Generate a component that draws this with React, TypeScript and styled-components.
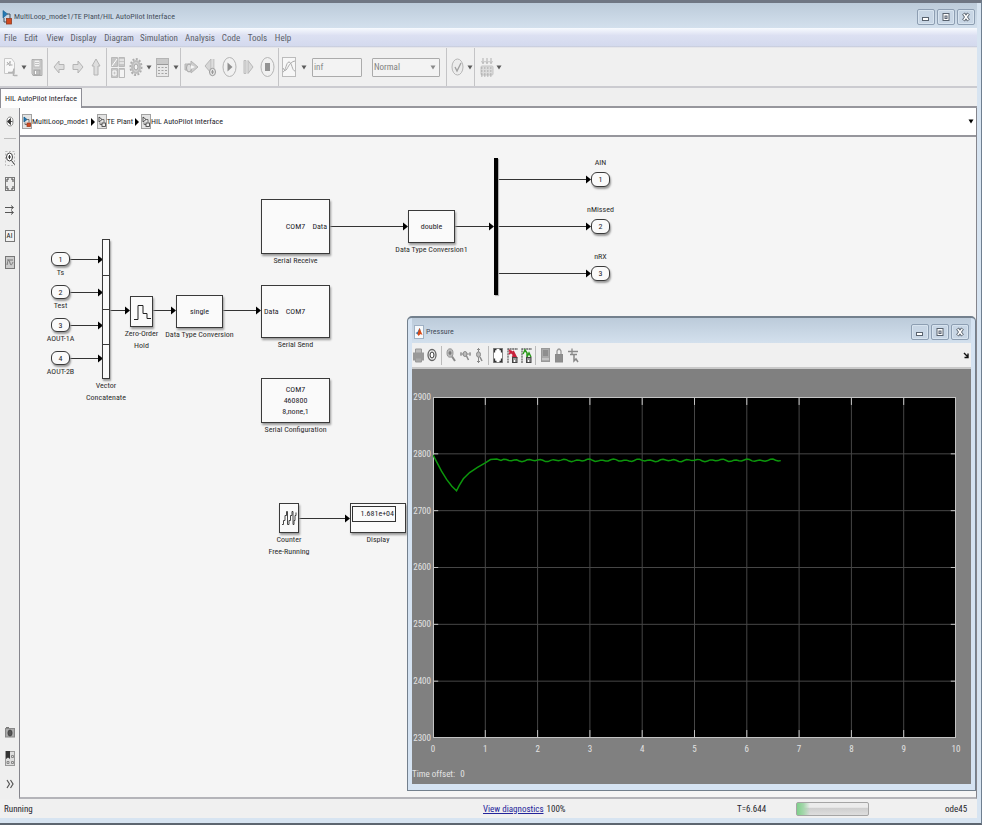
import React from "react";
import styled, { createGlobalStyle } from "styled-components";

const UI = `"Roboto Condensed", Roboto, "Liberation Sans", sans-serif`;

const GlobalStyle = createGlobalStyle`
  *, *::before, *::after { box-sizing: border-box; }
  body { margin: 0; font: 9px/12px ${UI}; color: #26262c; background: #d6e3f1; }
  button, input, select { font: inherit; color: inherit; margin: 0; }
  svg { display: block; flex: none; }
`;

/* ---------- window frame ---------- */

const AppWindow = styled.div`
  min-height: 100vh;
  display: flex;
  flex-direction: column;
  padding: 0 4px 5px 0;
  background: #d7e4f1;
  border-top: 3px solid #6f7683;
  border-right: 1px solid #6f7f90;
  border-bottom: 2px solid #5d6670;
`;

const TitleBar = styled.header<{ $height: number; $inset: number }>`
  display: flex;
  align-items: center;
  gap: 2px;
  flex: none;
  height: ${(p) => p.$height}px;
  padding: 3px ${(p) => p.$inset}px 0 2px;
  background: linear-gradient(#bccbda, #d3e0ed);
`;

const WindowTitle = styled.h1`
  flex: 1;
  margin: 0;
  font-weight: 400;
  font-size: 8px;
  line-height: 14px;
  color: #454f5c;
`;

const Caption = styled.div`
  display: flex;
  gap: 2px;
`;

const CaptionButton = styled.button`
  width: 18px;
  height: 16px;
  padding: 0;
  display: grid;
  place-items: center;
  border: 1px solid #8d9eb2;
  border-radius: 2px;
  background: #c8d6e5;
  box-shadow: inset 0 0 0 1px #d8e4ef;
`;

const MenuBar = styled.nav`
  display: flex;
  align-items: flex-start;
  flex: none;
  height: 19px;
  padding: 4px 4px 0;
  background: linear-gradient(#f7fafe, #dce0f2 40%, #d4daee 92%, #c6cad8);
`;

const MenuItem = styled.button<{ $width: number }>`
  width: ${(p) => p.$width}px;
  padding: 0;
  border: 0;
  background: none;
  font-size: 9px;
  line-height: 12px;
  color: #5c5f69;
`;

/* ---------- toolbars ---------- */

const ToolBar = styled.div`
  display: flex;
  flex: none;
  height: 41px;
  background: #f0f0f0;
  border-top: 1px solid #e6e6ea;
  border-bottom: 2px solid #cbcbd0;
  color: #b0b0b0;
`;

const ToolGroup = styled.div<{ $start?: number; $end?: number; $last?: boolean }>`
  display: flex;
  align-items: center;
  padding: 0 ${(p) => p.$end ?? 1}px 0 ${(p) => p.$start ?? 1}px;
  border-right: ${(p) => (p.$last ? 0 : 1)}px solid #c4c4c6;
`;

const ToolButton = styled.button<{ $width: number }>`
  width: ${(p) => p.$width}px;
  height: 24px;
  padding: 0;
  border: 0;
  background: none;
  display: grid;
  place-items: center;
`;

const StopTime = styled.input`
  width: 50px;
  height: 19px;
  margin-left: 4px;
  padding: 0 1px;
  border: 1px solid #ababab;
  border-radius: 1px;
  background: #f3f3f3;
  color: #8b8b8b;
`;

const SelectBox = styled.label`
  display: flex;
  align-items: center;
  width: 68px;
  height: 19px;
  margin: 0 5px 0 10px;
  padding-right: 3px;
  border: 1px solid #ababab;
  border-radius: 1px;
  background: #f3f3f3;
`;

const ModeSelect = styled.select`
  flex: 1;
  appearance: none;
  border: 0;
  padding: 0 1px;
  background: none;
  color: #808080;
`;

const TabStrip = styled.div`
  display: flex;
  flex: none;
  height: 20px;
  background: #efefef;
`;

const Tab = styled.button`
  padding: 0 4px;
  border: 1px solid #8e8e96;
  border-width: 1px 1px 0;
  background: #fdfdfd;
  font-size: 8px;
`;

const TabRest = styled.div`
  flex: 1;
  border-bottom: 2px solid #96969c;
`;

const Body = styled.div`
  flex: 1;
  display: flex;
  background: #efefef;
`;

const SideBar = styled.aside`
  width: 19px;
  flex: none;
  display: flex;
  flex-direction: column;
  align-items: center;
  padding-bottom: 2px;
`;

const SideButton = styled.button`
  width: 19px;
  height: 26px;
  padding: 0;
  border: 0;
  background: none;
  display: grid;
  place-items: center;
`;

const SideRule = styled.hr`
  width: 12px;
  margin: 4px 0 6px;
  border: 0;
  border-top: 1px solid #bdbdbd;
`;

const Spacer = styled.div`
  flex: 1;
`;

const Editor = styled.main`
  flex: 1;
  min-width: 0;
  display: flex;
  flex-direction: column;
  border-left: 1px solid #85858c;
  border-right: 1px solid #85858c;
  border-bottom: 2px solid #b4b4b9;
`;

const Crumbs = styled.nav`
  display: flex;
  align-items: center;
  flex: none;
  height: 29px;
  padding: 0 2px;
  background: #fff;
  border-bottom: 2px solid #96969c;
`;

const Crumb = styled.button`
  display: flex;
  align-items: center;
  gap: 0;
  padding: 0;
  border: 0;
  background: none;
  font-size: 8px;
`;

const CrumbArrow = styled.span`
  margin: 0 2px;
  border: 4px solid transparent;
  border-left: 4px solid #000;
  border-right: 0;
`;

const PathMenu = styled.button`
  margin-left: auto;
  padding: 0;
  border: 0;
  background: none;
`;

/* ---------- block diagram ---------- */

const Canvas = styled.section`
  position: relative;
  flex: 1;
  min-height: 600px;
  background: #f5f5f5;
  overflow: hidden;
`;

const Wires = styled.svg`
  position: absolute;
  inset: 0;
  width: 100%;
  height: 100%;
`;

const Block = styled.div<{ $x: number; $y: number; $w: number; $h: number; $round?: boolean }>`
  position: absolute;
  left: ${(p) => p.$x}px;
  top: ${(p) => p.$y}px;
  width: ${(p) => p.$w}px;
  height: ${(p) => p.$h}px;
  display: grid;
  place-items: center;
  text-align: center;
  font-size: 8px;
  line-height: 11px;
  background: #fafafa;
  border: 1px solid #3a3a3a;
  border-radius: ${(p) => (p.$round ? 6 : 0)}px;
  box-shadow: 1px 2px 2px #9a9a9a;
`;

const BlockName = styled.span<{ $above?: boolean }>`
  position: absolute;
  left: 50%;
  ${(p) => (p.$above ? "bottom: 100%; padding-bottom: 4px;" : "top: 100%; padding-top: 2px;")}
  transform: translateX(-50%);
  white-space: pre;
  font-size: 8px;
  line-height: 12px;
  color: #2e2e2e;
`;

const PortName = styled.span<{ $side: "left" | "right" }>`
  position: absolute;
  ${(p) => p.$side}: 2px;
  top: 50%;
  margin-top: -6px;
`;

const Bar = styled.div<{ $x: number; $y: number }>`
  position: absolute;
  left: ${(p) => p.$x}px;
  top: ${(p) => p.$y}px;
  width: 4px;
  height: 137px;
  background: #000;
  box-shadow: 1px 1px 1px #aaa;
`;

const ConcatCells = styled.div`
  width: 100%;
  height: 100%;
  display: grid;
  grid-template-rows: repeat(4, 1fr);
  > span + span { border-top: 1px solid #3a3a3a; }
`;

const Readout = styled.output`
  justify-self: start;
  align-self: start;
  width: 44px;
  height: 16px;
  margin: 2px 1px;
  padding: 1px 1px 0 0;
  border: 1px solid #333;
  text-align: right;
`;

/* ---------- scope window ---------- */

const ScopeWindow = styled.section`
  position: absolute;
  left: 387px;
  top: 179px;
  right: 0;
  bottom: 6px;
  display: flex;
  flex-direction: column;
  padding: 0 4px 6px;
  background: #d5e3f2;
  border: 2px solid #73808d;
  border-width: 2px 1px 1px;
  border-radius: 5px 5px 0 0;
`;

const ScopeTools = styled.div`
  display: flex;
  align-items: center;
  flex: none;
  height: 26px;
  padding-right: 1px;
  background: #f0f0f0;
  border-bottom: 2px solid #c9c9c9;
  color: #8a8a8a;
`;

const ScopeRule = styled.span`
  width: 1px;
  height: 19px;
  margin: 0 2px;
  background: #bbb;
`;

const DockButton = styled(ToolButton)`
  margin-left: auto;
`;

const ScopeBody = styled.div`
  flex: 1;
  display: grid;
  grid-template-columns: 21px 1fr;
  grid-template-rows: 1fr 16px;
  padding: 28px 15px 4px 0;
  background: #808080;
  color: #e2e2e2;
  font-size: 9px;
`;

const YAxis = styled.div`
  display: flex;
  flex-direction: column;
  justify-content: space-between;
  align-items: flex-end;
  padding-right: 2px;
  > span { height: 0; line-height: 0; }
`;

const XAxis = styled.div`
  grid-column: 2;
  display: flex;
  justify-content: space-between;
  padding-top: 5px;
  > span { width: 0; display: flex; justify-content: center; }
`;

const Plot = styled.svg`
  width: 100%;
  height: 100%;
  background: #000;
`;

const TimeOffset = styled.div`
  grid-column: 1 / 3;
  display: flex;
  gap: 5px;
  padding: 14px 0 0;
`;

/* ---------- status bar ---------- */

const StatusBar = styled.footer`
  display: grid;
  grid-template-columns: 479fr 254fr 59fr 149fr 32px;
  align-items: center;
  flex: none;
  height: 19px;
  padding-left: 4px;
  background: #f0f0f0;
  color: #26262c;
`;

const DiagLink = styled.a`
  color: #24249a;
  margin-right: 3px;
`;

const Progress = styled.div`
  width: 73px;
  height: 14px;
  border: 1px solid #a5a5a5;
  border-radius: 2px;
  background: linear-gradient(#ececec 35%, #cfcfcf 45%, #dedede);
`;

const ProgressFill = styled.div`
  width: 18%;
  height: 100%;
  background: linear-gradient(90deg, #7fd08b, #a5d7ac 50%, transparent);
`;

/* ---------- glyphs ---------- */

type GlyphProps = { w: number; h: number; children: React.ReactNode };
const Glyph = ({ w, h, children }: GlyphProps) => (
  <svg width={w} height={h} viewBox={`0 0 ${w} ${h}`} fill="none" stroke="currentColor" aria-hidden="true">
    {children}
  </svg>
);

const Caret = ({ fill = "#5b5b5b" }: { fill?: string }) => (
  <Glyph w={6} h={5}><path d="M0.500 0.500h5L3 4.500z" fill={fill} stroke="none" /></Glyph>
);

const MinGlyph = () => (
  <Glyph w={10} h={10}><rect x="1.500" y="5.500" width="6" height="3" fill="#fff" stroke="#59636f" /></Glyph>
);
const MaxGlyph = () => (
  <Glyph w={10} h={10}>
    <rect x="2" y="1.500" width="6" height="7" fill="#fff" stroke="#59636f" />
    <rect x="4" y="4" width="2" height="2.500" fill="#dde" stroke="#59636f" />
  </Glyph>
);
const CloseGlyph = () => (
  <Glyph w={10} h={10}>
    <path d="M2.500 1.500l5 7M7.500 1.500l-5 7" stroke="#59636f" strokeWidth="3.400" />
    <path d="M2.700 2l4.600 6M7.300 2l-4.600 6" stroke="#fff" strokeWidth="1.500" />
  </Glyph>
);

const ModelGlyph = () => (
  <Glyph w={10} h={15}>
    <path d="M1 0.500l4.500 3.500-4.500 4z" fill="#2479b5" stroke="#155a8c" strokeWidth=".6" />
    <path d="M5 4h3v5M2 8v4h3" stroke="#46505a" />
    <rect x="4.500" y="8.500" width="5" height="5.500" fill="#d24a20" stroke="#8f3a20" strokeWidth=".8" />
  </Glyph>
);

const CrumbGlyph = ({ root = false }: { root?: boolean }) => (
  <Glyph w={10} h={15}>
    <rect x="0.500" y="0.500" width="9" height="14" fill="#e4e4e4" stroke="#a2a2a2" />
    <path d="M2 3l3 2.500-3 2.500z" fill={root ? "#2479b5" : "#eee"} stroke={root ? "#155a8c" : "#333"} strokeWidth=".8" />
    <path d="M5 5.500h2v3M3 8.500v2h2" stroke="#555" strokeWidth=".8" />
    <rect x="5" y="9" width="3.500" height="3.500" fill={root ? "#d24a20" : "#eee"} stroke={root ? "#a33b1b" : "#333"} strokeWidth=".8" />
  </Glyph>
);

const NewGlyph = () => (
  <Glyph w={14} h={21}>
    <path d="M0.500 1.500h7l3 4v11h-10z" fill="#f8f8f8" stroke="#c8c8c8" />
    <path d="M2.500 8l4-3M3 5l3 4M6 4v4h2.500" stroke="#acacac" />
    <path d="M4 15.500h4q2-1 2-4M9.500 14v5M10 18.500h3.500" stroke="#b4b4b4" strokeWidth="1.500" />
  </Glyph>
);
const SaveGlyph = () => (
  <Glyph w={12} h={19}>
    <path d="M1 1.500h10v16h-9l-1-2z" fill="#d0d0d0" stroke="#adadad" />
    <rect x="3" y="2" width="6" height="7" fill="#f3f3f3" stroke="#b9b9b9" />
    <path d="M4 4.500h4M4 6.500h4" strokeWidth=".7" />
    <rect x="3" y="12" width="6" height="5" fill="#bbb" stroke="#a5a5a5" />
    <path d="M4.500 13v3" stroke="#fff" />
  </Glyph>
);
const LeftGlyph = () => (
  <Glyph w={12} h={14}><path d="M1 7l5-6v3.500h5v5h-5v3.500z" fill="#dedede" stroke="#b4b4b4" /></Glyph>
);
const RightGlyph = () => (
  <Glyph w={12} h={14}><path d="M11 7l-5-6v3.500h-5v5h5v3.500z" fill="#dedede" stroke="#b4b4b4" /></Glyph>
);
const UpGlyph = () => (
  <Glyph w={10} h={18}><path d="M5 1l4 7h-2v9h-4v-9h-2z" fill="#dedede" stroke="#b4b4b4" /></Glyph>
);
const LibraryGlyph = () => (
  <Glyph w={14} h={21}>
    <path d="M.5.5h6v9h-6zM8 .5h5.500v9h-5.500zM.5 11.500h6v9h-6zM8 11.500h5.500v9h-5.500z" fill="#c6c6c6" stroke="#b9b9b9" />
    <path d="M1 9l5-7M8.500 3h4.500M8.500 6h4.500M2 14h3v4h-3z" stroke="#fff" />
    <rect x="9" y="13" width="4" height="7" fill="#f4f4f4" stroke="none" />
  </Glyph>
);
const GearGlyph = () => (
  <Glyph w={14} h={20}>
    <ellipse cx="7" cy="10" rx="5.500" ry="8" strokeWidth="2" strokeDasharray="2 1.500" stroke="#adadad" />
    <ellipse cx="7" cy="10" rx="4" ry="6" fill="#d2d2d2" stroke="#bdbdbd" strokeWidth="2" />
    <ellipse cx="7" cy="10" rx="2" ry="3" fill="#f2f2f2" stroke="#a5a5a5" />
  </Glyph>
);
const ExplorerGlyph = () => (
  <Glyph w={13} h={19}>
    <rect x=".5" y=".5" width="12" height="18" fill="#e8e8e8" stroke="#b4b4b4" />
    <rect x="1" y="1" width="11" height="5" fill="#c9c9c9" stroke="none" />
    <path d="M1 6.500h11" stroke="#999" />
    <path d="M2 9.500h9M2 12.500h9M2 15.500h9" stroke="#a5a5a5" strokeDasharray="2 1.500" />
  </Glyph>
);
const StepOptGlyph = () => (
  <Glyph w={15} h={17}>
    <path d="M1 5h6v-3l7 6-7 6v-3h-6z" fill="#cdcdcd" stroke="#b4b4b4" />
    <ellipse cx="5" cy="9" rx="2.500" ry="4" fill="#ddd" stroke="#a5a5a5" />
    <path d="M7 6l4 2-4 2z" fill="#f6f6f6" stroke="none" />
  </Glyph>
);
const StepBackGlyph = () => (
  <Glyph w={13} h={20}>
    <path d="M7 2v14l-6-7z" fill="#d6d6d6" stroke="#b8b8b8" />
    <path d="M9.500 2v12" strokeWidth="2" stroke="#cacaca" />
    <ellipse cx="8.500" cy="15" rx="3" ry="3.700" fill="#e5e5e5" stroke="#999" />
    <path d="M7 15h3M8.500 13v4" stroke="#999" />
  </Glyph>
);
const PlayGlyph = () => (
  <Glyph w={15} h={22}>
    <ellipse cx="7.500" cy="11" rx="6.500" ry="9.500" fill="#f1f1f1" stroke="#b4b4b4" />
    <path d="M5.500 6.500l5 4.500-5 4.500z" fill="#8f8f8f" stroke="none" />
  </Glyph>
);
const StepGlyph = () => (
  <Glyph w={11} h={18}>
    <path d="M1 2.500h2v13h-2z" fill="#ddd" stroke="#bdbdbd" />
    <path d="M5 2.500l5 6.500-5 6.500z" fill="#dadada" stroke="#b8b8b8" />
  </Glyph>
);
const StopGlyph = () => (
  <Glyph w={15} h={22}>
    <ellipse cx="7.500" cy="11" rx="6.500" ry="9.500" fill="#f1f1f1" stroke="#b4b4b4" />
    <rect x="5" y="7" width="5" height="8" fill="#939393" stroke="none" />
  </Glyph>
);
const ScopeGlyph = () => (
  <Glyph w={15} h={21}>
    <rect x=".5" y=".5" width="13" height="19" fill="#f7f7f7" stroke="#bbb" />
    <path d="M1 15c3-1 3-10 6-10s3 9 6 9M1 11c4 8 4-6 12-7" stroke="#acacac" />
  </Glyph>
);
const CheckGlyph = () => (
  <Glyph w={13} h={18}>
    <ellipse cx="6.500" cy="9" rx="5.500" ry="8" fill="#ececec" stroke="#b6b6b6" />
    <path d="M4 9l2 4 4-8" stroke="#a0a0a0" strokeWidth="1.300" />
  </Glyph>
);
const BuildGlyph = () => (
  <Glyph w={14} h={19}>
    <path d="M3 0v5M7 0v5M11 0v5" />
    <path d="M1.500 3l1.500 3 1.500-3M5.500 3l1.500 3 1.500-3M9.500 3l1.500 3 1.500-3" strokeWidth=".7" />
    <rect x="1" y="8" width="12" height="9" rx="1" fill="#dcdcdc" stroke="#c4c4c4" />
    <path d="M1 10h12M1 13h12M1 16h12M1 18h12" stroke="#a2a2a2" strokeDasharray="1.500 1.500" />
  </Glyph>
);

const HideGlyph = () => (
  <Glyph w={8} h={11}>
    <ellipse cx="4" cy="5.500" rx="3" ry="4.500" fill="#fff" stroke="#888" />
    <path d="M1.500 5.500l3-3v6zM4 5.500h2.500" fill="#333" stroke="#333" strokeWidth=".8" />
  </Glyph>
);
const ZoomBoxGlyph = () => (
  <Glyph w={10} h={15}>
    <rect x=".5" y=".5" width="9" height="14" stroke="#bbb" strokeDasharray="2 1.500" />
    <ellipse cx="4.500" cy="6" rx="3" ry="4" fill="#fff" stroke="#444" />
    <path d="M3 6h3M4.500 4v4M6.500 9.500l3 4" stroke="#333" />
  </Glyph>
);
const FitGlyph = () => (
  <Glyph w={10} h={14}>
    <rect x=".5" y=".5" width="9" height="13" fill="#ececec" stroke="#777" />
    <path d="M2 5v-3h2M8 5v-3h-2M2 9v3h2M8 9v3h-2" stroke="#444" />
  </Glyph>
);
const SignalGlyph = () => (
  <Glyph w={9} h={10}><path d="M0 2.500h8M0 7.500h8M6 .5l2.500 2-2.500 2M6 5.500l2.500 2-2.500 2" stroke="#555" /></Glyph>
);
const FrameGlyph = styled.span`
  width: 10px;
  height: 12px;
  border: 1px solid #777;
  background: #f2f2f2;
  font-size: 7px;
  line-height: 10px;
  color: #111;
`;
const ImageGlyph = () => (
  <Glyph w={10} h={13}>
    <rect x=".5" y=".5" width="9" height="12" fill="#ccc" stroke="#777" />
    <path d="M2 9c1-6 2-6 3-2s2 1 3-1M2 4h6" stroke="#777" />
  </Glyph>
);
const CameraGlyph = () => (
  <Glyph w={10} h={12}>
    <rect x=".5" y="2.500" width="9" height="8.500" fill="#aaa" stroke="#888" />
    <path d="M1 1.500h3" stroke="#777" />
    <ellipse cx="5" cy="7" rx="2" ry="3" fill="#555" stroke="#444" />
  </Glyph>
);
const GridFlagGlyph = () => (
  <Glyph w={10} h={15}>
    <rect x=".5" y=".5" width="9" height="14" fill="#ddd" stroke="#999" />
    <path d="M1 0h4v8l-2-1.500-2 1.500z" fill="#333" stroke="none" />
    <path d="M6.500 4.500h2v2h-2zM2 10.500h2v2h-2zM6.500 10.500h2v2h-2z" stroke="#888" />
  </Glyph>
);
const MoreGlyph = () => (
  <Glyph w={8} h={10}><path d="M1 1l2.500 4-2.500 4M4.500 1l2.500 4-2.500 4" stroke="#555" strokeWidth="1.200" /></Glyph>
);

const MatlabGlyph = () => (
  <Glyph w={10} h={14}>
    <rect x=".5" y=".5" width="9" height="13" fill="#f7f9fb" stroke="#9fb1c4" />
    <path d="M1.500 8l2-1 2-4 1 2-2 5z" fill="#3274a8" stroke="none" />
    <path d="M5.500 3l3 7-2-1-2 2-1-2z" fill="#d84a17" stroke="none" />
  </Glyph>
);
const PrintGlyph = () => (
  <Glyph w={11} h={15}>
    <path d="M2.500 5v-4h6v4" fill="#bbb" stroke="#999" />
    <rect x=".5" y="5" width="10" height="7" fill="#999" stroke="#999" />
    <path d="M2.500 10h6v4h-6z" fill="#a8a8a8" stroke="#999" />
  </Glyph>
);
const ParamGlyph = () => (
  <Glyph w={10} h={14}>
    <ellipse cx="5" cy="7" rx="4" ry="5.500" stroke="#666" strokeWidth="1.300" />
    <ellipse cx="5" cy="7" rx="2" ry="3" fill="#fff" stroke="#333" />
  </Glyph>
);
const ZoomGlyph = () => (
  <Glyph w={10} h={14}>
    <ellipse cx="4" cy="5" rx="3" ry="4.200" fill="#b9b9b9" stroke="#999" />
    <path d="M2.500 5h3M4 3v4" stroke="#666" /><path d="M6 8.500l3 4.500" strokeWidth="2" />
  </Glyph>
);
const ZoomXGlyph = () => (
  <Glyph w={11} h={12}>
    <path d="M0 5h11M1 3v4M10 3v4" /><ellipse cx="5" cy="5" rx="2" ry="2.500" fill="#bbb" /><path d="M6.500 7l2 4" strokeWidth="1.500" />
  </Glyph>
);
const ZoomYGlyph = () => (
  <Glyph w={8} h={15}>
    <path d="M3.500 0v15M2 1.500h3M2 13.500h3" /><ellipse cx="3.500" cy="6.500" rx="2" ry="2.700" fill="#bbb" /><path d="M5 9l2 4" strokeWidth="1.500" />
  </Glyph>
);
const ScaleGlyph = () => (
  <Glyph w={10} h={15}>
    <rect x=".5" y=".5" width="9" height="14" fill="#fff" stroke="#888" />
    <path d="M1.500 4.500v-3h2M8.500 4.500v-3h-2M1.500 10.500v3h2M8.500 10.500v3h-2" stroke="#333" strokeWidth="1.300" />
  </Glyph>
);
const AxesGlyph = ({ color, restore = false }: { color: string; restore?: boolean }) => (
  <Glyph w={11} h={15}>
    <path d="M1 15v-14h10" stroke="#666" strokeDasharray="2 .6" strokeWidth="1.300" />
    {restore ? <path d="M2 6l2-4 2 3v4l2-4 2 4" stroke={color} strokeWidth="1.500" /> : <path d="M2 2l7 7M2 6l3-3M6 3l3 6-4-1" stroke={color} strokeWidth="1.800" />}
    <rect x="5.500" y="9.500" width="4.500" height="5" fill="#999" stroke="#444" />
    <path d="M7.500 12v2" stroke="#fff" />
  </Glyph>
);
const FloatGlyph = () => (
  <Glyph w={9} h={14}>
    <rect x=".5" y=".5" width="8" height="13" fill="#a9a9a9" stroke="#999" /><rect x="2" y="2" width="5" height="6" fill="#8e8e8e" stroke="none" /><path d="M1 11h7" stroke="#ddd" />
  </Glyph>
);
const LockGlyph = () => (
  <Glyph w={8} h={15}>
    <path d="M2 7v-4q2-4 4 0v4" stroke="#999" strokeWidth="1.300" /><rect x=".5" y="6.500" width="7" height="7.500" fill="#8e8e8e" />
  </Glyph>
);
const SelectorGlyph = () => (
  <Glyph w={11} h={15}>
    <path d="M0 3.500h10M4 .5v6M2 6.500h7" strokeWidth="1.300" /><path d="M6 7v6l2-2 2 3" stroke="#888" strokeWidth="1.500" />
  </Glyph>
);
const DockGlyph = () => (
  <Glyph w={6} h={7}><path d="M1 1l4 4M5 1.500v4h-3.500" stroke="#111" strokeWidth="1.400" /></Glyph>
);

const HoldGlyph = () => (
  <Glyph w={18} h={20}><path d="M1 17.500h4v-14h5v8h4v5h4" stroke="#222" /></Glyph>
);
const CounterGlyph = () => (
  <Glyph w={16} h={22}>
    <path d="M1 17.500h1.500v-4h1.500v-5h1.500v-4h1v13h1.500v-4h1.500v-5h1.500v-4h1v13h1v-4h1v-5h1v-3" stroke="#333" strokeWidth=".9" />
  </Glyph>
);

/* ---------- data ---------- */

const menus: [string, number][] = [
  ["File", 12], ["Edit", 30], ["View", 18], ["Display", 39], ["Diagram", 32], ["Simulation", 48],
  ["Analysis", 34], ["Code", 28], ["Tools", 25], ["Help", 26],
];

const inports = ["Ts", "Test", "AOUT-1A", "AOUT-2B"];
const outports = ["AIN", "nMissed", "nRX"];

const wires: [number, number, number][] = [
  [50, 122, 83], [50, 155, 83], [50, 188, 83], [50, 221, 83],
  [90, 173, 110], [132, 173, 156], [202, 173, 241],
  [309, 89, 388], [434, 89, 474],
  [478, 42, 571], [478, 89, 571], [478, 136, 571],
  [279, 381, 330],
];

const PLOT_W = 1000;
const PLOT_H = 600;
const trace = (() => {
  const knots = [[0, 2798], [0.08, 2784], [0.16, 2770], [0.26, 2755], [0.36, 2743], [0.45, 2735], [0.5, 2744],
    [0.58, 2756], [0.7, 2767], [0.85, 2776], [1, 2784], [1.1, 2790], [1.22, 2791]];
  for (let t = 1.3, i = 0; t <= 6.68; t += 0.05, i++) {
    knots.push([t, 2788.500 + Math.sin(i * 1.35) * 1.5 + Math.sin(i * 0.62) * 1]);
  }
  return knots.map(([t, v]) => `${(t / 10) * PLOT_W},${((2900 - v) / 600) * PLOT_H}`).join(" ");
})();

const CaptionButtons = () => (
  <Caption>
    <CaptionButton aria-label="Minimize"><MinGlyph /></CaptionButton>
    <CaptionButton aria-label="Maximize"><MaxGlyph /></CaptionButton>
    <CaptionButton aria-label="Close"><CloseGlyph /></CaptionButton>
  </Caption>
);

const Tool = ({ label, w, children }: { label: string; w: number; children: React.ReactNode }) => (
  <ToolButton aria-label={label} $width={w}>{children}</ToolButton>
);

function Scope() {
  const ticks = Array.from({ length: 11 }, (_, i) => i);
  return (
    <ScopeWindow aria-label="Pressure">
      <TitleBar $height={25} $inset={2}>
        <MatlabGlyph />
        <WindowTitle as="h2">Pressure</WindowTitle>
        <CaptionButtons />
      </TitleBar>
      <ScopeTools>
        <Tool label="Print" w={13}><PrintGlyph /></Tool>
        <Tool label="Parameters" w={14}><ParamGlyph /></Tool>
        <ScopeRule />
        <Tool label="Zoom" w={14}><ZoomGlyph /></Tool>
        <Tool label="Zoom X-axis" w={14}><ZoomXGlyph /></Tool>
        <Tool label="Zoom Y-axis" w={14}><ZoomYGlyph /></Tool>
        <ScopeRule />
        <Tool label="Autoscale" w={14}><ScaleGlyph /></Tool>
        <Tool label="Save axes settings" w={14}><AxesGlyph color="#c8203a" /></Tool>
        <Tool label="Restore axes settings" w={14}><AxesGlyph color="#2c9a1c" restore /></Tool>
        <ScopeRule />
        <Tool label="Floating scope" w={14}><FloatGlyph /></Tool>
        <Tool label="Lock axes" w={14}><LockGlyph /></Tool>
        <Tool label="Signal selection" w={14}><SelectorGlyph /></Tool>
        <DockButton aria-label="Dock" $width={8}><DockGlyph /></DockButton>
      </ScopeTools>
      <ScopeBody>
        <YAxis>
          {[2900, 2800, 2700, 2600, 2500, 2400, 2300].map((v) => <span key={v}>{v}</span>)}
        </YAxis>
        <Plot viewBox={`0 0 ${PLOT_W} ${PLOT_H}`} preserveAspectRatio="none" role="img" aria-label="Pressure against time">
          <g stroke="#464646" strokeWidth="1">
            {ticks.slice(1, 10).map((i) => <line key={i} x1={i * 100} x2={i * 100} y1="0" y2={PLOT_H} vectorEffect="non-scaling-stroke" />)}
            {[1, 2, 3, 4, 5].map((i) => <line key={i} x1="0" x2={PLOT_W} y1={i * 100} y2={i * 100} vectorEffect="non-scaling-stroke" />)}
          </g>
          <g stroke="#c4c4c4" strokeWidth="1">
            {ticks.slice(1, 10).map((i) => <path key={i} d={`M${i * 100} 0v14M${i * 100} 600v-14`} vectorEffect="non-scaling-stroke" />)}
            {[1, 2, 3, 4, 5].map((i) => <path key={i} d={`M0 ${i * 100}h10M1000 ${i * 100}h-10`} vectorEffect="non-scaling-stroke" />)}
          </g>
          <rect width={PLOT_W} height={PLOT_H} fill="none" stroke="#c4c4c4" strokeWidth="2" vectorEffect="non-scaling-stroke" />
          <polyline points={trace} fill="none" stroke="#0c960c" strokeWidth="1.500" vectorEffect="non-scaling-stroke" />
        </Plot>
        <XAxis>{ticks.map((i) => <span key={i}>{i}</span>)}</XAxis>
        <TimeOffset><span>Time offset:</span><span>0</span></TimeOffset>
      </ScopeBody>
    </ScopeWindow>
  );
}

function Diagram() {
  return (
    <Canvas>
      <Wires aria-hidden="true">
        {wires.map(([x1, y, x2]) => (
          <g key={`${x1}-${y}`}>
            <path d={`M${x1} ${y + 0.5}H${x2 - 4}`} stroke="#333" />
            <path d={`M${x2 - 5} ${y - 3.5}v8l5-4z`} fill="#000" />
          </g>
        ))}
      </Wires>
      {inports.map((name, i) => (
        <Block key={name} $x={31} $y={115 + i * 33} $w={19} $h={14} $round>
          {i + 1}<BlockName>{name}</BlockName>
        </Block>
      ))}
      <Block $x={82} $y={102} $w={8} $h={140}>
        <ConcatCells><span /><span /><span /><span /></ConcatCells>
        <BlockName>{"Vector\nConcatenate"}</BlockName>
      </Block>
      <Block $x={110} $y={159} $w={23} $h={31}><HoldGlyph /><BlockName>{"Zero-Order\nHold"}</BlockName></Block>
      <Block $x={156} $y={158} $w={47} $h={33}>single<BlockName>Data Type Conversion</BlockName></Block>
      <Block $x={241} $y={62} $w={69} $h={55}>COM7<PortName $side="right">Data</PortName><BlockName>Serial Receive</BlockName></Block>
      <Block $x={241} $y={148} $w={69} $h={53}>COM7<PortName $side="left">Data</PortName><BlockName>Serial Send</BlockName></Block>
      <Block $x={241} $y={241} $w={69} $h={45}><span>COM7<br />460800<br />8,none,1</span><BlockName>Serial Configuration</BlockName></Block>
      <Block $x={388} $y={73} $w={47} $h={33}>double<BlockName>Data Type Conversion1</BlockName></Block>
      <Bar $x={474} $y={21} />
      {outports.map((name, i) => (
        <Block key={name} $x={571} $y={35 + i * 47} $w={19} $h={15} $round>
          {i + 1}<BlockName $above>{name}</BlockName>
        </Block>
      ))}
      <Block $x={259} $y={366} $w={20} $h={30}><CounterGlyph /><BlockName>{"Counter\nFree-Running"}</BlockName></Block>
      <Block $x={330} $y={366} $w={56} $h={30}><Readout>1.681e+04</Readout><BlockName>Display</BlockName></Block>
      <Scope />
    </Canvas>
  );
}

export default function App() {
  return (
    <AppWindow>
      <GlobalStyle />
      <TitleBar $height={25} $inset={2}>
        <ModelGlyph />
        <WindowTitle>MultiLoop_mode1/TE Plant/HIL AutoPilot Interface</WindowTitle>
        <CaptionButtons />
      </TitleBar>
      <MenuBar>
        {menus.map(([name, width]) => <MenuItem key={name} $width={width}>{name}</MenuItem>)}
      </MenuBar>
      <ToolBar>
        <ToolGroup $start={3}>
          <Tool label="New" w={16}><NewGlyph /></Tool>
          <Tool label="New options" w={9}><Caret /></Tool>
          <Tool label="Save" w={18}><SaveGlyph /></Tool>
        </ToolGroup>
        <ToolGroup>
          <Tool label="Back" w={19}><LeftGlyph /></Tool>
          <Tool label="Forward" w={19}><RightGlyph /></Tool>
          <Tool label="Up to parent" w={18}><UpGlyph /></Tool>
        </ToolGroup>
        <ToolGroup $start={2} $end={0}>
          <Tool label="Library browser" w={17}><LibraryGlyph /></Tool>
          <Tool label="Model configuration" w={19}><GearGlyph /></Tool>
          <Tool label="Configuration options" w={8}><Caret /></Tool>
          <Tool label="Model explorer" w={18}><ExplorerGlyph /></Tool>
          <Tool label="Explorer options" w={9}><Caret /></Tool>
        </ToolGroup>
        <ToolGroup>
          <Tool label="Stepping options" w={19}><StepOptGlyph /></Tool>
          <Tool label="Step back" w={19}><StepBackGlyph /></Tool>
          <Tool label="Run" w={19}><PlayGlyph /></Tool>
          <Tool label="Step forward" w={19}><StepGlyph /></Tool>
          <Tool label="Stop" w={19}><StopGlyph /></Tool>
        </ToolGroup>
        <ToolGroup>
          <Tool label="Simulation data inspector" w={19}><ScopeGlyph /></Tool>
          <Tool label="Inspector options" w={9}><Caret /></Tool>
          <StopTime aria-label="Simulation stop time" defaultValue="inf" />
          <SelectBox>
            <ModeSelect aria-label="Simulation mode" defaultValue="Normal"><option>Normal</option></ModeSelect>
            <Caret fill="#8a8a8a" />
          </SelectBox>
        </ToolGroup>
        <ToolGroup $end={0}>
          <Tool label="Model advisor" w={18}><CheckGlyph /></Tool>
          <Tool label="Advisor options" w={8}><Caret /></Tool>
        </ToolGroup>
        <ToolGroup $start={3} $last>
          <Tool label="Build model" w={17}><BuildGlyph /></Tool>
          <Tool label="Build options" w={8}><Caret /></Tool>
        </ToolGroup>
      </ToolBar>
      <TabStrip>
        <Tab>HIL AutoPilot Interface</Tab>
        <TabRest />
      </TabStrip>
      <Body>
        <SideBar>
          <SideButton aria-label="Hide browser"><HideGlyph /></SideButton>
          <SideRule />
          <SideButton aria-label="Zoom"><ZoomBoxGlyph /></SideButton>
          <SideButton aria-label="Fit to view"><FitGlyph /></SideButton>
          <SideButton aria-label="Sample time display"><SignalGlyph /></SideButton>
          <SideButton aria-label="Annotation"><FrameGlyph>AI</FrameGlyph></SideButton>
          <SideButton aria-label="Image"><ImageGlyph /></SideButton>
          <Spacer />
          <SideButton aria-label="Screenshot"><CameraGlyph /></SideButton>
          <SideButton aria-label="Viewmarks"><GridFlagGlyph /></SideButton>
          <SideButton aria-label="More"><MoreGlyph /></SideButton>
        </SideBar>
        <Editor>
          <Crumbs>
            <Crumb><CrumbGlyph root />MultiLoop_mode1</Crumb>
            <CrumbArrow />
            <Crumb><CrumbGlyph />TE Plant</Crumb>
            <CrumbArrow />
            <Crumb><CrumbGlyph />HIL AutoPilot Interface</Crumb>
            <PathMenu aria-label="Path history"><Caret fill="#000" /></PathMenu>
          </Crumbs>
          <Diagram />
        </Editor>
      </Body>
      <StatusBar>
        <span>Running</span>
        <span><DiagLink href="#diagnostics">View diagnostics</DiagLink>100%</span>
        <span>T=6.644</span>
        <Progress role="progressbar" aria-label="Simulation progress" aria-valuenow={6.644} aria-valuemax={10}>
          <ProgressFill />
        </Progress>
        <span>ode45</span>
      </StatusBar>
    </AppWindow>
  );
}
